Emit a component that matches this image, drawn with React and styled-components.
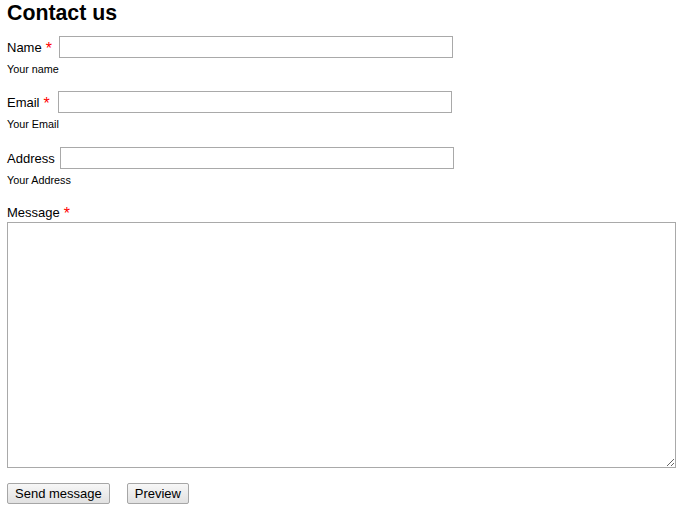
import React from "react";
import styled, { createGlobalStyle } from "styled-components";

const Global = createGlobalStyle`
  html, body { margin: 0; padding: 0; background: #fff; }
  body { font-family: "Liberation Sans", Arial, sans-serif; color: #000; font-size: 13px; }
`;

const Page = styled.form`
  padding: 0 7px;
  display: flex;
  flex-direction: column;
`;

const Title = styled.h1`
  margin: 0 0 10px;
  font-size: 21.3px;
  line-height: 26px;
  font-weight: bold;
`;

const Field = styled.div`
  display: flex;
  flex-direction: column;
  margin-bottom: ${(p) => p.$gap || 16}px;
`;

const Row = styled.div`
  display: flex;
  align-items: center;
  height: 22px;
`;

const Label = styled.label`
  font-size: 13px;
  line-height: ${(p) => (p.$block ? "18px" : "16px")};
  padding-top: 2px;
  display: flex;
  align-items: center;
`;

const Star = styled.span`
  color: #f00;
  font-size: 16px;
  margin-left: 4px;
  margin-right: 3px;
  line-height: 16px;
  position: relative;
  top: 1px;
`;

const Input = styled.input`
  box-sizing: border-box;
  width: 394px;
  height: 22px;
  margin: 0 0 0 ${(p) => p.$offset}px;
  border: 1px solid #a9a9a9;
  padding: 1px 3px;
  font: inherit;
  background: #fff;
  outline: none;
`;

const Desc = styled.div`
  font-size: 10.8px;
  line-height: 14px;
  margin-top: 4px;
`;

const TextArea = styled.textarea`
  box-sizing: border-box;
  width: 669px;
  height: 246px;
  border: 1px solid #a9a9a9;
  margin: 0;
  padding: 2px;
  font: inherit;
  display: block;
  outline: none;
`;

const Actions = styled.div`
  display: flex;
  gap: 17px;
  margin-top: 15px;
`;

const Button = styled.button`
  box-sizing: border-box;
  height: 21px;
  padding: 0 7px;
  font-family: "Liberation Sans", Arial, sans-serif;
  font-size: 13px;
  color: #000;
  border: 1px solid #a6a6a6;
  border-radius: 2px;
  background: linear-gradient(#f7f7f7, #e1e1e1);
  line-height: 19px;
  cursor: pointer;
`;

function TextField({ label, required, desc, offset, gap }) {
  return (
    <Field $gap={gap}>
      <Row>
        <Label>
          {label}
          {required && <Star>*</Star>}
        </Label>
        <Input type="text" $offset={offset} />
      </Row>
      <Desc>{desc}</Desc>
    </Field>
  );
}

export default function App() {
  return (
    <>
      <Global />
      <Page onSubmit={(e) => e.preventDefault()}>
        <Title>Contact us</Title>
        <TextField label="Name" required desc="Your name" offset={4} gap={15} />
        <TextField label="Email" required desc="Your Email" offset={5} gap={16} />
        <TextField label="Address" desc="Your Address" offset={5} gap={15} />
        <Label $block>
          Message<Star>*</Star>
        </Label>
        <TextArea />
        <Actions>
          <Button type="submit">Send message</Button>
          <Button type="button">Preview</Button>
        </Actions>
      </Page>
    </>
  );
}
